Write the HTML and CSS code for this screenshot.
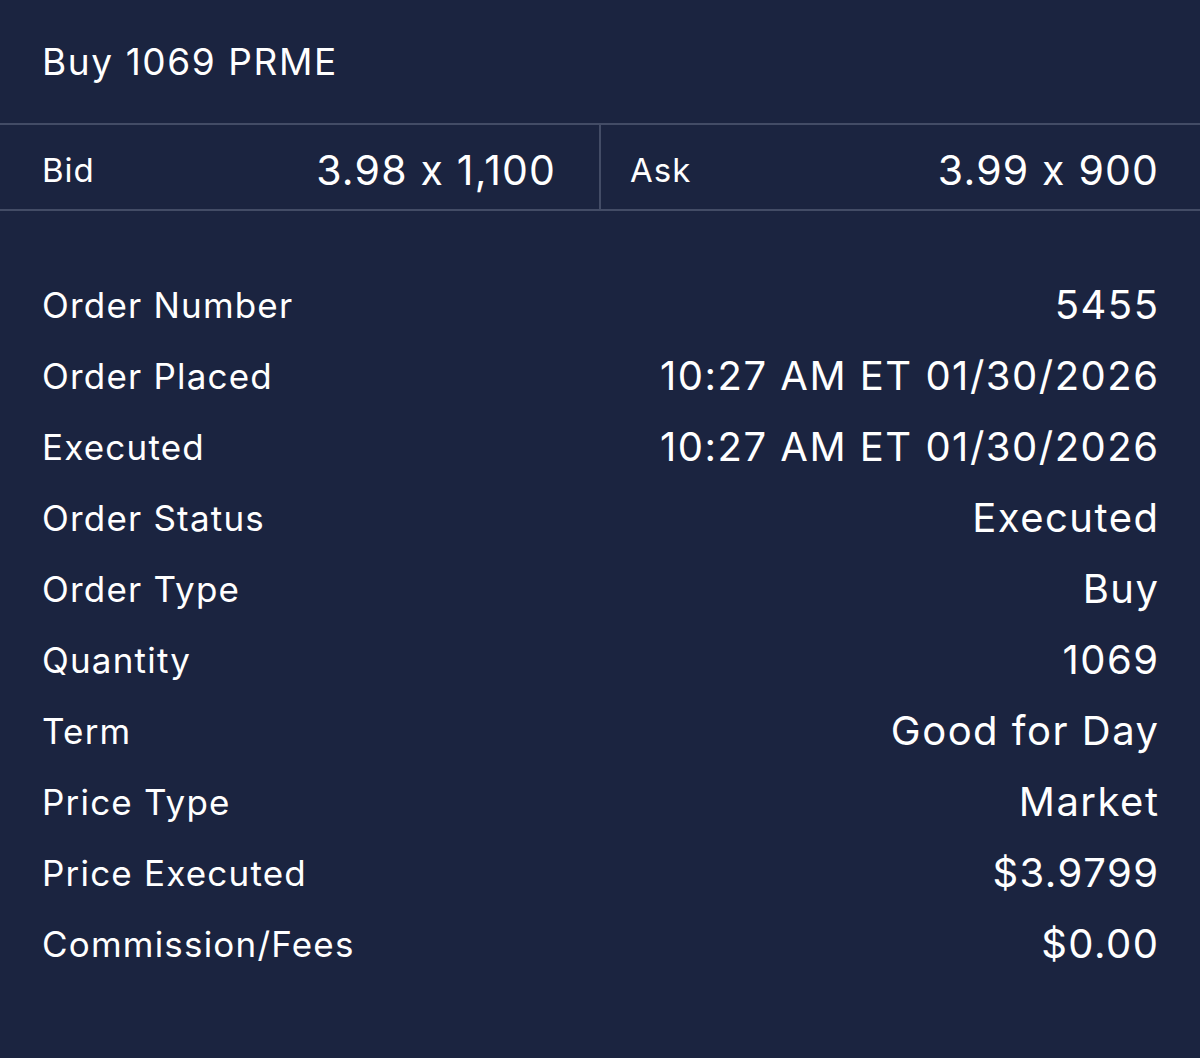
FILE: index.html
```html
<!DOCTYPE html>
<html lang="en">
<head>
<meta charset="utf-8">
<title>Buy 1069 PRME</title>
<link rel="stylesheet" href="styles.css">
</head>
<body>
<div class="screen">
  <header class="title">Buy 1069 PRME</header>
  <div class="quote">
    <div class="quote-cell quote-bid">
      <span class="quote-label">Bid</span>
      <span class="quote-value">3.98 x 1,100</span>
    </div>
    <div class="quote-cell quote-ask">
      <span class="quote-label">Ask</span>
      <span class="quote-value">3.99 x 900</span>
    </div>
  </div>
  <dl class="details">
    <div class="row"><dt>Order Number</dt><dd>5455</dd></div>
    <div class="row"><dt>Order Placed</dt><dd>10:27 AM ET 01/30/2026</dd></div>
    <div class="row"><dt>Executed</dt><dd>10:27 AM ET 01/30/2026</dd></div>
    <div class="row"><dt>Order Status</dt><dd>Executed</dd></div>
    <div class="row"><dt>Order Type</dt><dd>Buy</dd></div>
    <div class="row"><dt>Quantity</dt><dd>1069</dd></div>
    <div class="row"><dt>Term</dt><dd>Good for Day</dd></div>
    <div class="row"><dt>Price Type</dt><dd>Market</dd></div>
    <div class="row"><dt>Price Executed</dt><dd>$3.9799</dd></div>
    <div class="row"><dt>Commission/Fees</dt><dd>$0.00</dd></div>
  </dl>
</div>
</body>
</html>
```

FILE: styles.css
```css
html, body {
  margin: 0;
  padding: 0;
  background: #1b2440;
}
body {
  font-family: Inter, "Noto Sans", "Liberation Sans", sans-serif;
  font-feature-settings: "calt" 0;
  color: #ffffff;
  width: 1200px;
  height: 1058px;
  overflow: hidden;
}
.screen {
  display: flex;
  flex-direction: column;
}
.title {
  height: 123px;
  display: flex;
  align-items: center;
  padding: 0 42px;
  font-size: 37px;
  letter-spacing: 1.6px;
  font-weight: 400;
  box-sizing: border-box;
}
.quote {
  display: flex;
  border-top: 2px solid #434c66;
  border-bottom: 2px solid #434c66;
  height: 88px;
  box-sizing: border-box;
}
.quote-cell {
  display: flex;
  align-items: center;
  justify-content: space-between;
  box-sizing: border-box;
  padding-top: 5px;
}
.quote-bid {
  width: 601px;
  padding-left: 42px;
  padding-right: 44px;
  border-right: 2px solid #434c66;
}
.quote-ask {
  flex: 1;
  padding-left: 29px;
  padding-right: 42px;
}
.quote-label {
  font-size: 33px;
  letter-spacing: 1px;
}
.quote-value {
  font-size: 41px;
  letter-spacing: 1.2px;
  margin-right: -1.2px;
}
.details {
  margin: 0;
  padding: 58px 42px 0;
  display: flex;
  flex-direction: column;
}
.row {
  height: 71px;
  display: flex;
  align-items: center;
  justify-content: space-between;
}
.row dt {
  font-size: 35px;
  letter-spacing: 1.2px;
}
.row dd {
  margin: 0 -1.5px 0 0;
  font-size: 40px;
  letter-spacing: 1.5px;
}
```
